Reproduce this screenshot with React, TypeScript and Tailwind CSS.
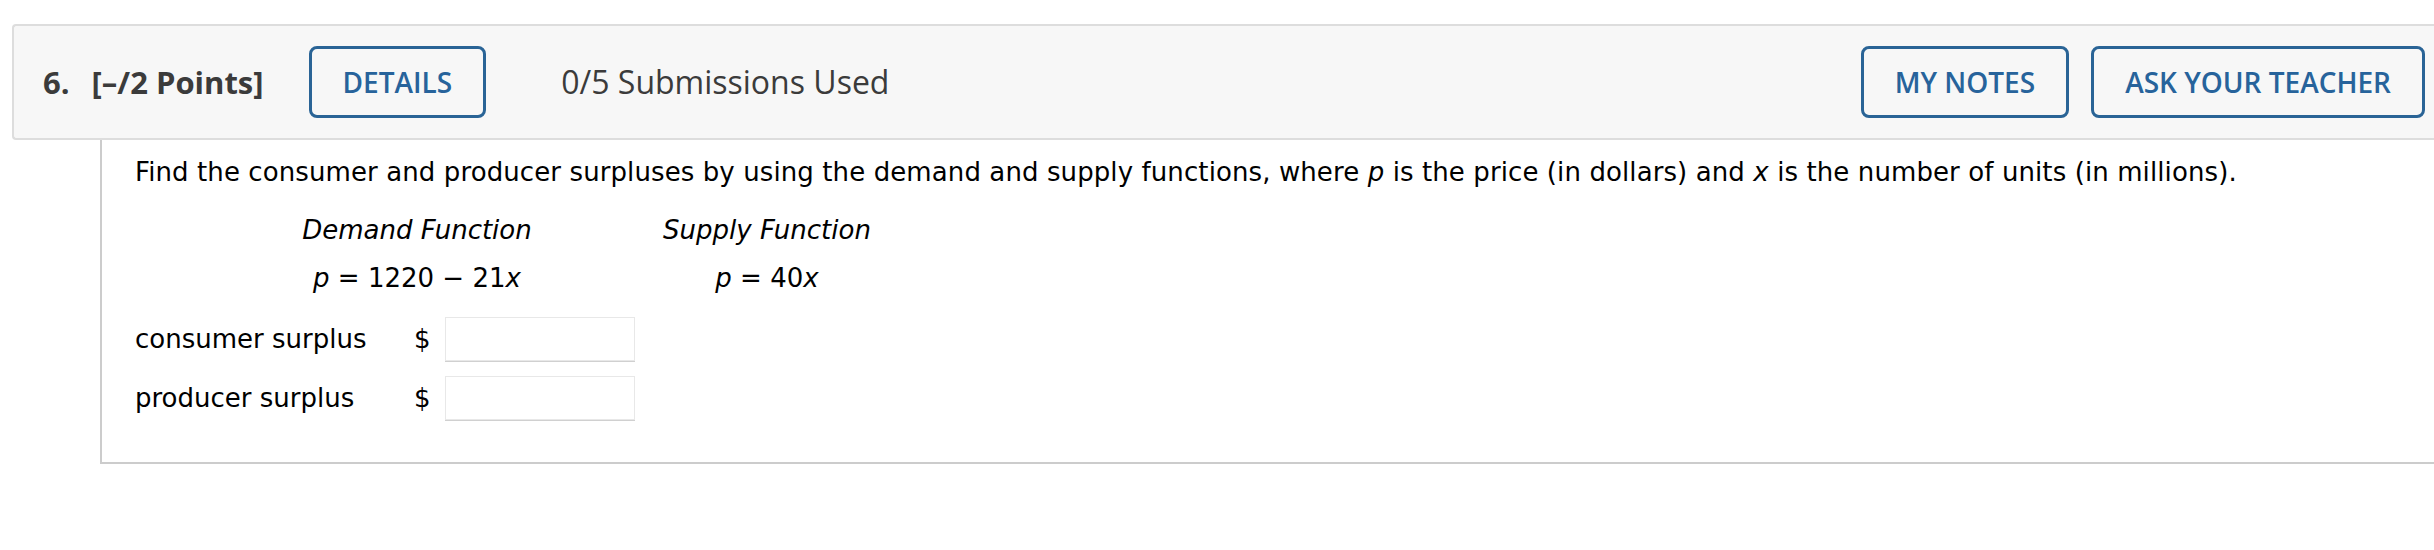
import React from "react";

const blueBtn =
  "h-[72px] border-[3px] border-[#2a6496] rounded-[8px] px-[31px] flex items-center text-[28px] font-semibold text-[#27639b] bg-transparent leading-none";

export default function App() {
  return (
    <div className="w-[2434px] h-[550px] bg-white overflow-hidden pt-[24px] pl-[12px]">
      <div
        className="flex items-center h-[116px] border-2 border-r-0 border-[#dddddd] rounded-l-[4px] bg-[#f7f7f7] pl-[29px] pr-[9px]"
        style={{ fontFamily: '"Open Sans", sans-serif' }}
      >
        <span className="text-[31px] font-bold text-[#3b3b3b]">6.</span>
        <span className="ml-[22px] text-[31px] font-bold text-[#3b3b3b]">[–/2 Points]</span>
        <button className={`${blueBtn} ml-[45px]`}>DETAILS</button>
        <span className="ml-[75px] text-[32px] text-[#3b3b3b]">0/5 Submissions Used</span>
        <div className="ml-auto flex gap-[22px]">
          <button className={blueBtn}>MY NOTES</button>
          <button className={blueBtn}>ASK YOUR TEACHER</button>
        </div>
      </div>
      <div
        className="ml-[88px] h-[324px] border-l-2 border-b-2 border-[#cccccc] pl-[33px] pt-[13px] text-black text-[26px] leading-[38px]"
        style={{ fontFamily: '"DejaVu Sans", Verdana, sans-serif' }}
      >
        <p className="tracking-[0.1px]">
          Find the consumer and producer surpluses by using the demand and supply functions, where{" "}
          <i>p</i> is the price (in dollars) and <i>x</i> is the number of units (in millions).
        </p>
        <div className="ml-[107px] mt-[20px] grid grid-cols-[350px_350px] gap-y-[10px] text-center">
          <i>Demand Function</i>
          <i>Supply Function</i>
          <span>
            <i>p</i> = 1220 − 21<i>x</i>
          </span>
          <span>
            <i>p</i> = 40<i>x</i>
          </span>
        </div>
        <div className="mt-[20px] flex flex-col gap-[15px]">
          <div className="flex items-center">
            <span className="w-[279px]">consumer surplus</span>
            <span className="w-[31px]">$</span>
            <input className="w-[190px] h-[44px] bg-white border border-[#e8e8e8] shadow-[0_1px_0_#d0d0d0] outline-none" />
          </div>
          <div className="flex items-center">
            <span className="w-[279px]">producer surplus</span>
            <span className="w-[31px]">$</span>
            <input className="w-[190px] h-[44px] bg-white border border-[#e8e8e8] shadow-[0_1px_0_#d0d0d0] outline-none" />
          </div>
        </div>
      </div>
    </div>
  );
}
